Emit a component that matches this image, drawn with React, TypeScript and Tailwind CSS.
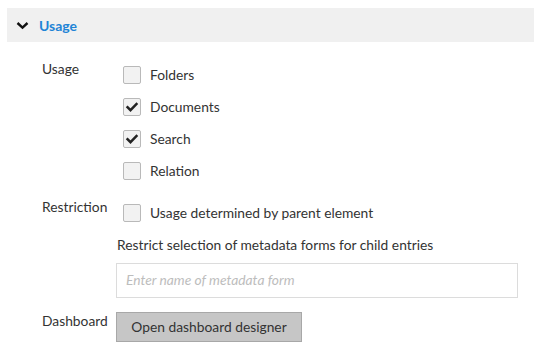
const usageOptions = [
  { label: "Folders", checked: false },
  { label: "Documents", checked: true },
  { label: "Search", checked: true },
  { label: "Relation", checked: false },
];

function Checkbox({ checked }: { checked: boolean }) {
  return (
    <span className="flex h-[18px] w-[18px] shrink-0 items-center justify-center rounded-[2px] border border-[#b9b9b9] bg-[#f2f2f2]">
      {checked && (
        <svg width="14" height="14" viewBox="0 0 14 14" fill="none" stroke="#222" strokeWidth="2.4" strokeLinecap="square">
          <path d="M2.5 7.2l3 3L11.5 4" />
        </svg>
      )}
    </span>
  );
}

function CheckRow({ label, checked }: { label: string; checked: boolean }) {
  return (
    <div className="flex h-8 items-center">
      <span className="ml-[7px]">
        <Checkbox checked={checked} />
      </span>
      <span className="ml-[9px] text-[13.8px] leading-5 text-[#333]">{label}</span>
    </div>
  );
}

export default function App() {
  return (
    <div className="h-[355px] w-[534px] overflow-hidden bg-white pl-[7px] pt-2 font-['Lato',sans-serif] text-[#333]">
      <div className="flex h-[34px] items-center bg-[#f0f0f0] pl-[9px]">
        <svg width="13" height="9" viewBox="0 0 13 9" fill="none" stroke="#111" strokeWidth="2.4">
          <path d="M1.5 2l5 4.6 5-4.6" />
        </svg>
        <span className="ml-[10px] text-[14px] font-bold text-[#1f84d6]">Usage</span>
      </div>

      <div className="pl-[35px] pt-[17px]">
        <div className="flex">
          <div className="w-[74px] text-[13.8px] leading-5">Usage</div>
          <div>
            {usageOptions.map((o) => (
              <CheckRow key={o.label} label={o.label} checked={o.checked} />
            ))}
          </div>
        </div>

        <div className="mt-[10px] flex">
          <div className="w-[74px] text-[13.8px] leading-5">Restriction</div>
          <div className="flex-1 pr-[16px]">
            <CheckRow label="Usage determined by parent element" checked={false} />
            <div className="mt-[6px] pl-px text-[13.8px] leading-5">Restrict selection of metadata forms for child entries</div>
            <div className="mt-2 flex h-[35px] w-[402px] items-center border border-[#dcdcdc] pl-[9px] text-[13.8px] italic text-[#bdbdbd]">
              Enter name of metadata form
            </div>
          </div>
        </div>

        <div className="mt-[13px] flex">
          <div className="w-[74px] text-[13.8px] leading-5">Dashboard</div>
          <button className="mt-px flex h-[30px] w-[186px] items-center justify-center border border-[#a8a8a8] bg-[#c6c6c6] text-[13.8px] text-[#333]">
            Open dashboard designer
          </button>
        </div>
      </div>
    </div>
  );
}
